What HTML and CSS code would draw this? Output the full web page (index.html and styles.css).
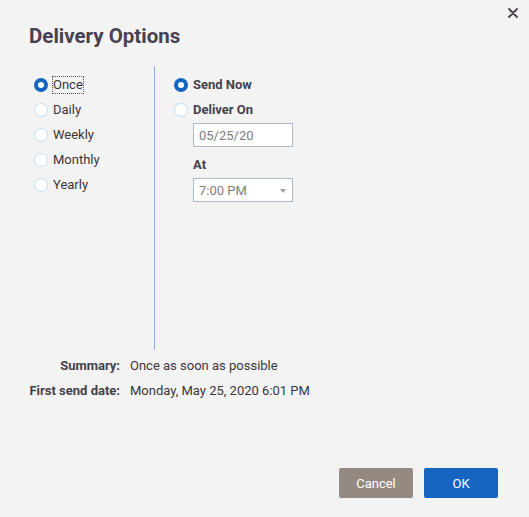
FILE: index.html
```html
<!DOCTYPE html>
<html>
<head>
<meta charset="utf-8">
<link rel="stylesheet" href="styles.css">
</head>
<body>
<div class="dialog">
  <button class="close" aria-label="Close">
    <svg width="10" height="10" viewBox="0 0 10 10"><path d="M1 1L9 9M9 1L1 9" stroke="#4a4150" stroke-width="1.8" stroke-linecap="round"/></svg>
  </button>
  <h1 class="title">Delivery Options</h1>
  <div class="options">
    <div class="col-left">
      <label class="row"><span class="radio checked"></span><span class="label focus">Once</span></label>
      <label class="row"><span class="radio"></span><span class="label">Daily</span></label>
      <label class="row"><span class="radio"></span><span class="label">Weekly</span></label>
      <label class="row"><span class="radio"></span><span class="label">Monthly</span></label>
      <label class="row"><span class="radio"></span><span class="label">Yearly</span></label>
    </div>
    <div class="col-right">
      <label class="row"><span class="radio checked"></span><span class="label bold">Send Now</span></label>
      <label class="row"><span class="radio"></span><span class="label bold">Deliver On</span></label>
      <div class="sub">
        <div class="field">05/25/20</div>
        <div class="at">At</div>
        <div class="field select">7:00 PM<span class="caret"></span></div>
      </div>
    </div>
  </div>
  <div class="summary">
    <div class="s-label">Summary:</div><div class="s-value">Once as soon as possible</div>
    <div class="s-label">First send date:</div><div class="s-value">Monday, May 25, 2020 6:01 PM</div>
  </div>
  <div class="actions">
    <button class="btn cancel">Cancel</button>
    <button class="btn ok">OK</button>
  </div>
</div>
</body>
</html>
```
FILE: styles.css
```css
* { box-sizing: border-box; }
html, body { margin: 0; padding: 0; }
body {
  background: #f3f3f3;
  font-family: Roboto, "Liberation Sans", Arial, sans-serif;
  font-size: 13px;
  color: #3a3640;
}
.dialog {
  position: relative;
  width: 529px;
  height: 517px;
}
.close {
  position: absolute;
  top: 8px;
  left: 508px;
  width: 10px;
  height: 10px;
  padding: 0;
  border: 0;
  background: none;
  display: flex;
}
.title {
  margin: 0;
  padding: 23px 0 0 29px;
  font-size: 20.5px;
  line-height: 26px;
  font-weight: 700;
  color: #4a4150;
  height: 66px;
}
.options {
  display: flex;
  height: 284px;
}
.col-left {
  width: 155px;
  padding: 6px 0 0 34px;
  border-right: 1px solid #8fb0d8;
}
.col-right {
  padding: 6px 0 0 19px;
}
.row {
  display: flex;
  align-items: center;
  height: 25px;
}
.radio {
  width: 14px;
  height: 14px;
  border-radius: 50%;
  background: #fff;
  border: 1px solid #bfe0f2;
  margin-right: 4px;
  flex: none;
}
.radio.checked {
  border: 4px solid #1565c0;
}
.label {
  padding: 1px 0;
  border: 1px dotted transparent;
  line-height: 14px;
}
.label.focus { border-color: #555; }
.label.bold { font-weight: 700; color: #45404c; }
.sub {
  padding: 1px 0 0 19px;
}
.field {
  width: 100px;
  height: 24px;
  border: 1px solid #a9b9cc;
  background: #fff;
  color: #7d7d7d;
  padding-left: 5px;
  display: flex;
  align-items: center;
}
.select { position: relative; }
.caret {
  position: absolute;
  right: 6px;
  top: 10px;
  width: 0;
  height: 0;
  border-left: 3.5px solid transparent;
  border-right: 3.5px solid transparent;
  border-top: 4px solid #a0a0a0;
}
.at {
  font-weight: 700;
  color: #45404c;
  padding: 10px 0 5px;
  line-height: 16px;
}
.summary {
  display: grid;
  grid-template-columns: 120px auto;
  column-gap: 10px;
  row-gap: 9px;
  padding-top: 8px;
  line-height: 16px;
}
.s-label {
  text-align: right;
  font-weight: 700;
  color: #45404c;
}
.s-value { color: #3a3640; }
.actions {
  display: flex;
  justify-content: flex-end;
  gap: 11px;
  padding: 69px 31px 0 0;
}
.btn {
  width: 74px;
  height: 30px;
  border: 0;
  border-radius: 2px;
  color: #fff;
  font-family: inherit;
  font-size: 13px;
}
.cancel { background: #958a81; }
.ok { background: #1565c0; }
```
